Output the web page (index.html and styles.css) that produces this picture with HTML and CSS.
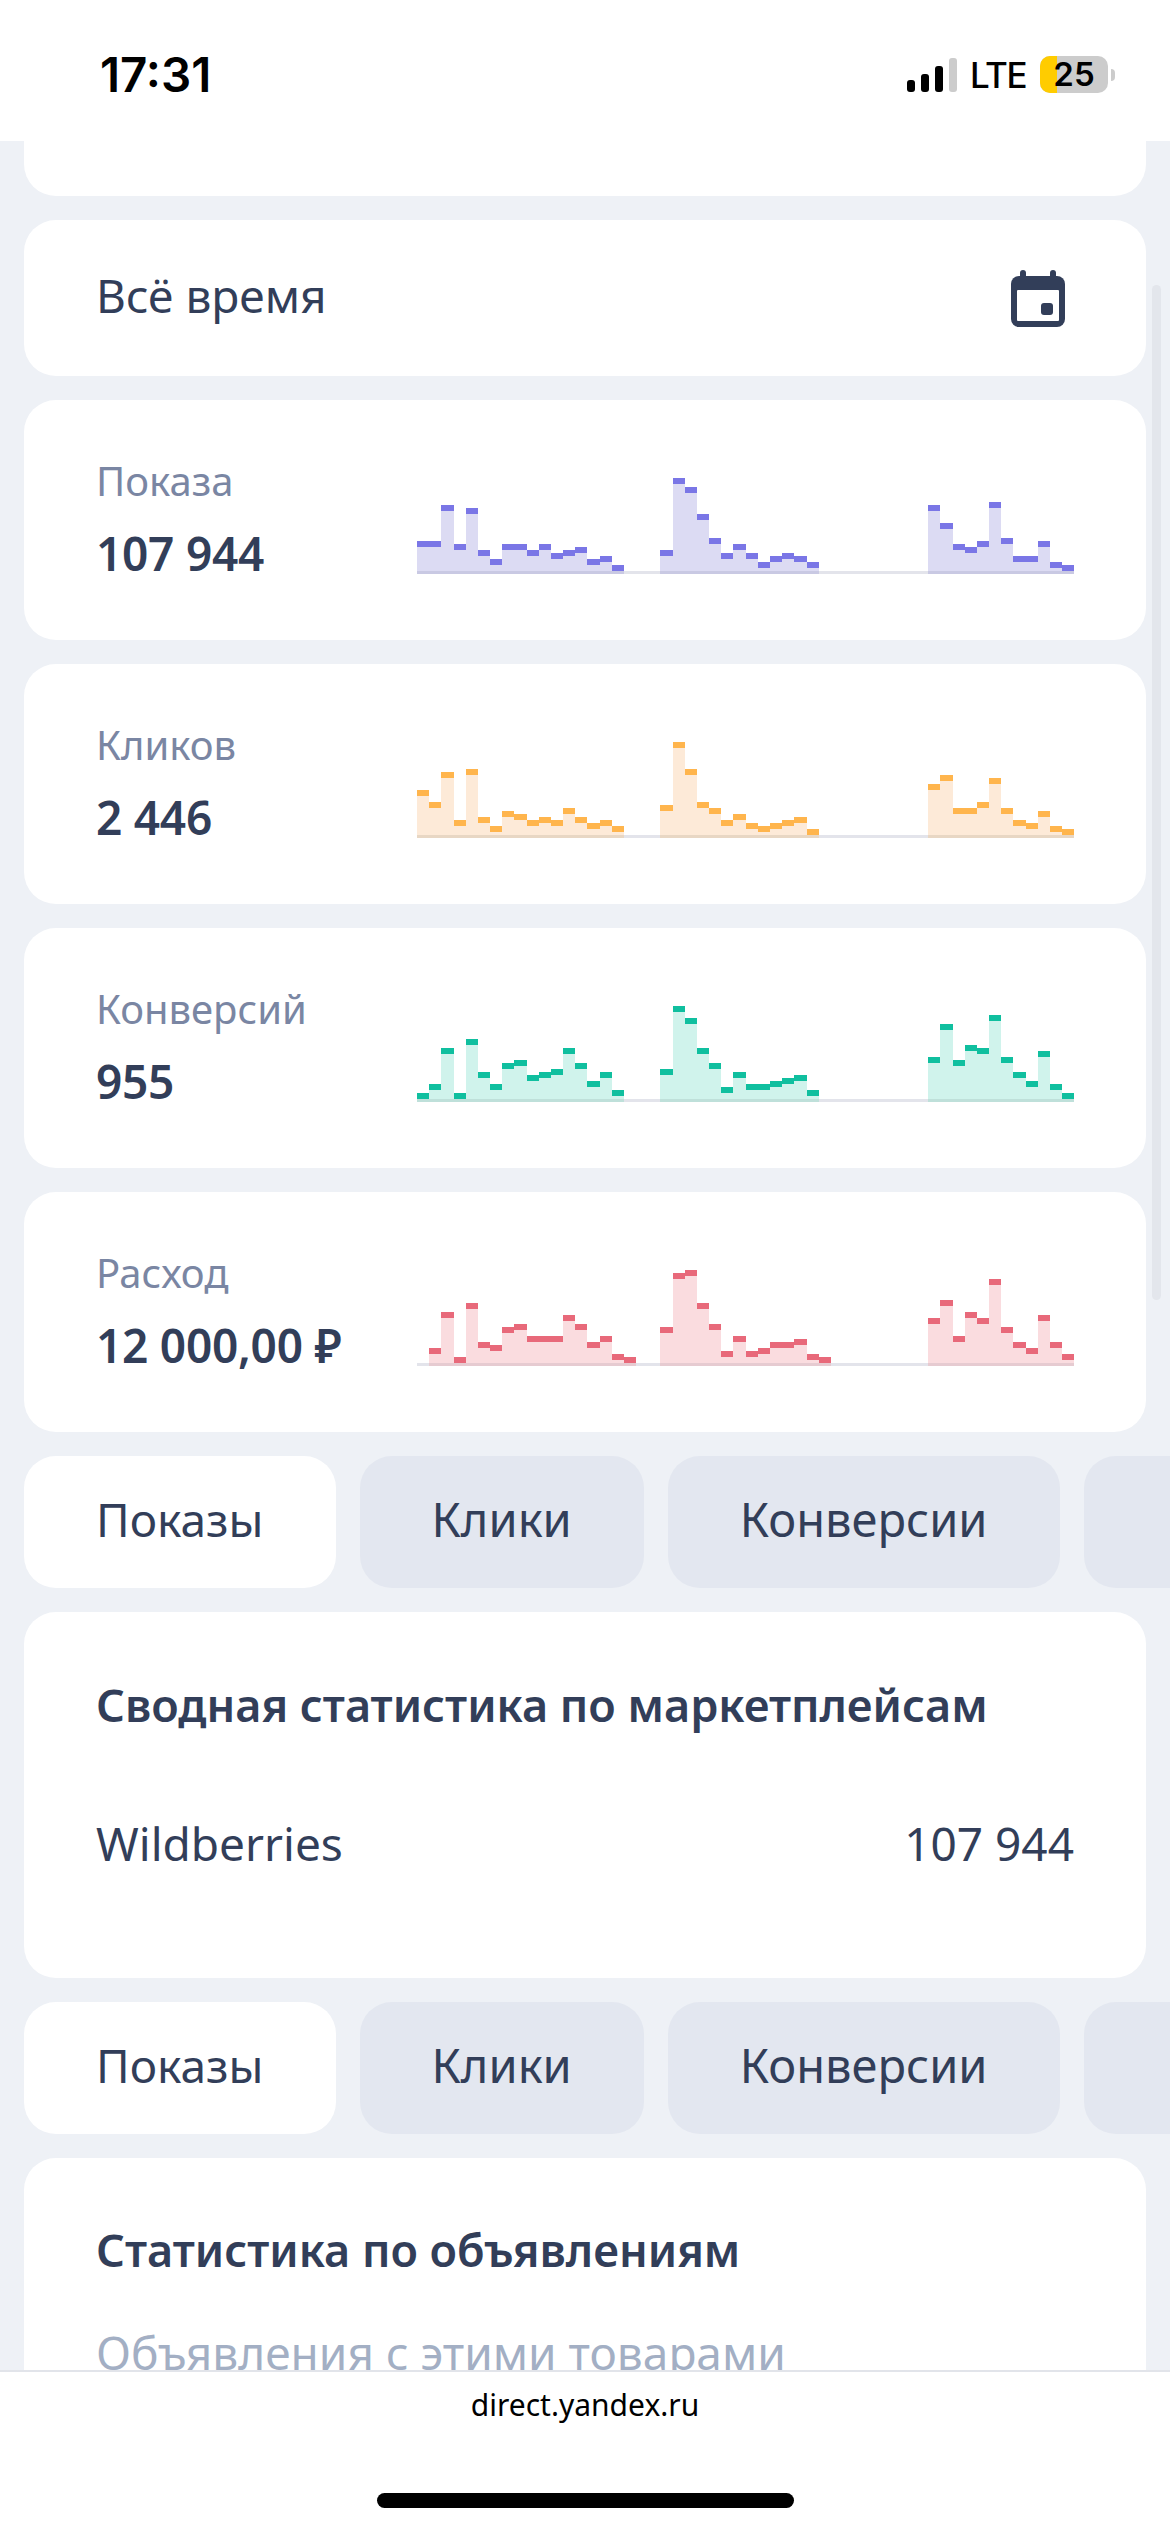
FILE: index.html
```html
<!DOCTYPE html>
<html lang="ru">
<head>
  <meta charset="UTF-8" />
  <title>Яндекс Директ</title>
  <link rel="stylesheet" href="styles.css">
</head>
<body>
  <div class="app">
    <header class="status">
      <span class="time">17:31</span>
      <div class="status-right">
        <div class="signal"><i class="s1"></i><i class="s2"></i><i class="s3"></i><i class="s4"></i></div>
        <span class="lte">LTE</span>
        <div class="battery"><div class="battery-fill"></div><span class="battery-num">25</span></div>
        <div class="battery-nub"></div>
      </div>
    </header>

    <main class="content">
      <div class="card stub"></div>

      <div class="card period">
        <span>Всё время</span>
        <svg class="calendar" viewBox="0 0 54 57" width="54" height="57">
          <rect fill="#323e59" x="9" y="0" width="6" height="12" rx="3"/>
          <rect fill="#323e59" x="39" y="0" width="6" height="12" rx="3"/>
          <rect fill="#323e59" x="0" y="6" width="54" height="51" rx="8"/>
          <rect fill="#fff" x="6" y="20" width="42" height="31" rx="1"/>
          <rect fill="#323e59" x="30" y="33" width="12" height="12" rx="3"/>
        </svg>
      </div>

      <div class="card stat">
        <div class="stat-text"><div class="stat-label">Показа</div><div class="stat-value">107 944</div></div>
        <div class="chart purple" data-series="purple"></div>
      </div>
      <div class="card stat">
        <div class="stat-text"><div class="stat-label">Кликов</div><div class="stat-value">2 446</div></div>
        <div class="chart orange" data-series="orange"></div>
      </div>
      <div class="card stat">
        <div class="stat-text"><div class="stat-label">Конверсий</div><div class="stat-value">955</div></div>
        <div class="chart green" data-series="green"></div>
      </div>
      <div class="card stat">
        <div class="stat-text"><div class="stat-label">Расход</div><div class="stat-value">12 000,00 ₽</div></div>
        <div class="chart red" data-series="red"></div>
      </div>

      <div class="tabs">
        <div class="tab active">Показы</div>
        <div class="tab">Клики</div>
        <div class="tab">Конверсии</div>
        <div class="tab"></div>
      </div>

      <div class="card summary">
        <h2>Сводная статистика по маркетплейсам</h2>
        <div class="summary-row"><span>Wildberries</span><span>107 944</span></div>
      </div>

      <div class="tabs">
        <div class="tab active">Показы</div>
        <div class="tab">Клики</div>
        <div class="tab">Конверсии</div>
        <div class="tab"></div>
      </div>

      <div class="card ads">
        <h2>Статистика по объявлениям</h2>
        <p>Объявления с этими товарами</p>
      </div>
    </main>

    <footer class="browser">
      <div class="url">direct.yandex.ru</div>
      <div class="home"></div>
    </footer>

    <div class="scrollbar"></div>
  </div>

  <script src="charts.js"></script>
</body>
</html>
```

FILE: styles.css
```css
* {
  margin: 0;
  padding: 0;
  box-sizing: border-box;
}

html, body {
  height: 2532px;
  overflow: hidden;
}

body {
  font-family: "Noto Sans", sans-serif;
  background-color: #eef1f6;
  color: #323e59;
}

.app {
  position: relative;
  display: flex;
  flex-direction: column;
  height: 2532px;
}

/* Status bar */
.status {
  flex: 0 0 141px;
  display: flex;
  justify-content: space-between;
  align-items: center;
  padding: 8px 55px 0 100px;
  background-color: #fff;
  color: #000;
}

.time {
  font-family: Inter, sans-serif;
  font-size: 47.5px;
  font-weight: 600;
}

.status-right {
  display: flex;
  align-items: center;
}

.signal {
  display: flex;
  align-items: flex-end;
  gap: 6px;
  height: 34px;
  margin-right: 13px;
}

.signal i {
  width: 8px;
  background-color: #000;
  border-radius: 3px;
}

.s1 { height: 12px; }
.s2 { height: 18px; }
.s3 { height: 26px; }
.signal .s4 { height: 34px; background-color: #ccc; }

.lte {
  font-family: Inter, sans-serif;
  font-size: 35px;
  font-weight: 500;
  letter-spacing: -1.5px;
  margin-right: 14px;
}

.battery {
  position: relative;
  display: flex;
  align-items: center;
  justify-content: center;
  width: 68px;
  height: 37px;
  background-color: #ccc;
  border-radius: 10px;
}

.battery-fill {
  position: absolute;
  left: 0;
  top: 0;
  bottom: 0;
  width: 17px;
  background-color: #fc0;
  border-radius: 10px 0 0 10px;
}

.battery-num {
  position: relative;
  font-family: Inter, sans-serif;
  font-size: 33px;
  font-weight: 600;
  line-height: 37px;
}

.battery-nub {
  width: 4px;
  height: 12px;
  margin-left: 3px;
  background-color: #ccc;
  border-radius: 0 4px 4px 0;
}

/* Content */
.content {
  flex: 1;
  min-height: 0;
  overflow: hidden;
  display: flex;
  flex-direction: column;
  gap: 24px;
  padding: 0 24px;
}

.card {
  flex: none;
  background-color: #fff;
  border-radius: 32px;
}

.stub {
  height: 55px;
  border-radius: 0 0 32px 32px;
}

.period {
  height: 156px;
  display: flex;
  justify-content: space-between;
  align-items: center;
  padding: 0 81px 0 72px;
  font-size: 46px;
}

.period span {
  margin-bottom: 7px;
}

.stat {
  height: 240px;
  display: flex;
  align-items: flex-start;
  justify-content: space-between;
  padding: 56px 72px 0;
}

.stat-label {
  font-size: 40px;
  color: #7a86a3;
  line-height: 50px;
}

.stat-value {
  font-size: 46px;
  font-weight: 600;
  letter-spacing: -0.25px;
  line-height: 62px;
  margin-top: 16px;
  white-space: nowrap;
}

/* Charts */
.chart {
  position: relative;
  display: flex;
  align-items: flex-end;
  flex: none;
  width: 657px;
  height: 118px;
}

.chart::after {
  content: "";
  position: absolute;
  left: 0;
  right: 0;
  bottom: 0;
  height: 3px;
  background-color: #e3e4eb;
}

.slot {
  position: relative;
  z-index: 1;
  flex: 1;
  border-bottom: 3px solid var(--base);
  background-color: var(--fill);
}

.slot.empty {
  background: none;
  border: none;
}

.slot::before {
  content: "";
  position: absolute;
  left: 0;
  right: 0;
  top: 0;
  height: 6px;
  background-color: var(--mark);
}

.slot.empty::before {
  display: none;
}

.purple { --mark: #7a76e6; --fill: #dcdbf3; --base: #c9c9e3; }
.orange { --mark: #ffb54d; --fill: #fdead8; --base: #e8d7c4; }
.green { --mark: #10bf9f; --fill: #d0f3ec; --base: #bfe0da; }
.red { --mark: #e8697a; --fill: #fadcdf; --base: #e6cbd1; }

/* Tabs */
.tabs {
  flex: none;
  display: flex;
  gap: 24px;
  margin-right: -24px;
  overflow: hidden;
}

.tab {
  flex: none;
  height: 132px;
  display: flex;
  align-items: center;
  padding: 0 72px 6px;
  background-color: #e3e7f0;
  border-radius: 32px;
  font-size: 47px;
}

.tab.active {
  background-color: #fff;
  font-size: 46px;
}

/* Summary cards */
.summary {
  height: 366px;
  padding: 63px 72px 0;
}

h2 {
  font-size: 45px;
  font-weight: 600;
  line-height: 60px;
}

.summary-row {
  display: flex;
  justify-content: space-between;
  margin-top: 78px;
  font-size: 46px;
  line-height: 60px;
}

.ads {
  height: 400px;
  padding: 62px 72px 0;
}

.ads p {
  margin-top: 42px;
  font-size: 46px;
  line-height: 60px;
  color: #a3afc4;
  white-space: nowrap;
}

/* Browser bar */
.browser {
  flex: 0 0 162px;
  position: relative;
  background-color: #fff;
  border-top: 2px solid #e2e4ea;
}

.url {
  margin-top: 12px;
  text-align: center;
  font-size: 30px;
  line-height: 42px;
  color: #000;
}

.home {
  position: absolute;
  left: 377px;
  bottom: 24px;
  width: 417px;
  height: 15px;
  background-color: #000;
  border-radius: 8px;
}

.scrollbar {
  position: absolute;
  left: 1152px;
  top: 285px;
  width: 9px;
  height: 1015px;
  background-color: #e3e6ec;
  border-radius: 5px;
}
```

FILE: charts.js
```js
// heights in px, 0 = empty slot. 54 slots per chart
const gap2 = [0, 0, 0];
const gap3 = [0, 0, 0, 0, 0, 0, 0, 0, 0];

const series = {
  purple: [
    33, 33, 69, 30, 66, 24, 15, 30, 30, 24, 30, 21, 24, 27, 15, 18, 9, ...gap2,
    24, 96, 87, 60, 36, 21, 30, 21, 12, 18, 21, 18, 12, ...gap3,
    69, 51, 30, 27, 33, 72, 36, 18, 18, 33, 12, 9
  ],
  orange: [
    48, 36, 66, 18, 69, 21, 12, 27, 24, 18, 21, 18, 30, 21, 15, 18, 12, ...gap2,
    33, 96, 69, 36, 30, 18, 24, 15, 12, 15, 18, 21, 9, ...gap3,
    54, 63, 30, 30, 36, 60, 30, 18, 15, 27, 12, 9
  ],
  green: [
    9, 18, 54, 9, 63, 30, 18, 39, 42, 27, 30, 33, 54, 39, 21, 30, 12, ...gap2,
    33, 96, 84, 54, 39, 15, 30, 18, 18, 21, 24, 27, 12, ...gap3,
    45, 78, 42, 57, 54, 87, 45, 30, 21, 51, 18, 9
  ],
  red: [
    0, 18, 54, 9, 63, 24, 21, 39, 42, 30, 30, 30, 51, 42, 24, 30, 12, 9, 0, 0,
    39, 93, 96, 63, 42, 15, 30, 15, 18, 24, 24, 27, 12, 9, 0, 0, 0, 0, 0, 0, 0, 0,
    48, 66, 30, 54, 48, 87, 39, 24, 18, 51, 24, 12
  ]
};

document.querySelectorAll('.chart').forEach((chart) => {
  series[chart.dataset.series].forEach((h) => {
    const slot = document.createElement('div');
    slot.className = h ? 'slot' : 'slot empty';
    slot.style.height = h + 'px';
    chart.appendChild(slot);
  });
});
```
